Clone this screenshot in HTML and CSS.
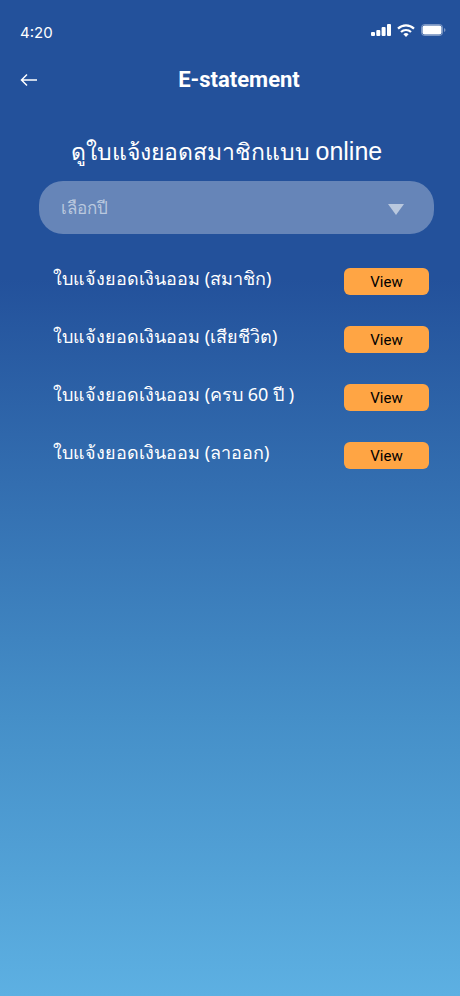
FILE: index.html
```html
<!DOCTYPE html>
<html lang="th">
<head>
<meta charset="utf-8">
<meta name="viewport" content="width=device-width, initial-scale=1">
<title>E-statement</title>
<link rel="stylesheet" href="styles.css">
</head>
<body>
<div class="status">
  <span class="time">4:20</span>
  <div class="indicators">
    <svg width="20" height="12" viewBox="0 0 20 12" fill="#fff" aria-hidden="true"><rect y="8" width="4" height="4" rx="1"/><rect x="5.300" y="6" width="4" height="6" rx="1"/><rect x="10.600" y="3" width="4" height="9" rx="1"/><rect x="16" width="4" height="12" rx="1"/></svg>
    <svg width="18" height="13" viewBox="0 0 18 13" fill="none" stroke="#fff" stroke-width="2.2" aria-hidden="true"><path d="M1 4.6a11.500 11.500 0 0 1 16 0M4 8a7.200 7.200 0 0 1 10 0"/><path d="M6.400 10.200a4 4 0 0 1 5.200 0L9 13z" fill="#fff" stroke="none"/></svg>
    <svg width="25" height="12" viewBox="0 0 25 12" aria-hidden="true"><rect x=".5" y=".5" width="21" height="11" rx="3" fill="none" stroke="#fff" stroke-opacity=".4"/><rect x="1.500" y="1.500" width="19" height="9" rx="2" fill="#fff"/><path d="M23 4v4q1.500-.6 1.500-2T23 4" fill="#fff" fill-opacity=".4"/></svg>
  </div>
</div>
<header class="bar">
  <button class="back" type="button" aria-label="Back"><svg width="18" height="14" viewBox="0 0 18 14" fill="none" stroke="#fff" stroke-width="1.5" aria-hidden="true"><path d="M17 7H1.500M7 1.500 1.500 7 7 12.500"/></svg></button>
  <h1>E-statement</h1>
</header>
<main>
  <h2><label for="year">ดูใบแจ้งยอดสมาชิกแบบ <span class="latin">online</span></label></h2>
  <div class="picker">
    <select id="year"><option>เลือกปี</option></select>
    <svg class="arrow" width="18" height="12" viewBox="0 0 18 12" aria-hidden="true"><path d="M1 0h16L9 11z" fill="#b9c8de"/></svg>
  </div>
  <ul class="list">
    <li><span class="name">ใบแจ้งยอดเงินออม (สมาชิก)</span><button type="button">View</button></li>
    <li><span class="name">ใบแจ้งยอดเงินออม (เสียชีวิต)</span><button type="button">View</button></li>
    <li><span class="name">ใบแจ้งยอดเงินออม (ครบ 60 ปี )</span><button type="button">View</button></li>
    <li><span class="name">ใบแจ้งยอดเงินออม (ลาออก)</span><button type="button">View</button></li>
  </ul>
</main>
</body>
</html>
```
FILE: styles.css
```css
* { box-sizing: border-box; }
body {
  margin: 0;
  min-height: 100vh;
  color: #fff;
  font-family: Roboto, "Noto Sans", sans-serif;
  background: linear-gradient(#23519b 0%, #23519b 28%, #458fc8 72%, #5db0e2 100%);
}
.status { display: flex; justify-content: space-between; align-items: center; height: 60px; padding: 4px 14px 0 20px; }
.time { font-family: Inter, sans-serif; font-size: 15px; }
.indicators { display: flex; align-items: center; gap: 6px; padding-bottom: 4px; }
.bar { display: grid; grid-template-columns: 18px 1fr; align-items: center; height: 39px; padding: 0 20px; }
.back { display: flex; padding: 0; border: 0; background: none; }
h1 { margin: 0; font-size: 22px; font-weight: 700; text-align: center; }
main { padding: 32px 26px 32px 39px; }
h2 { margin: 0; padding-right: 20px; font-size: 23px; line-height: 40px; font-weight: 400; text-align: center; white-space: nowrap; }
.latin { font-family: "Liberation Sans", sans-serif; font-size: 25px; }
.picker { position: relative; margin-top: 8px; }
select { display: block; width: 100%; height: 53px; padding: 0 22px; border: 0; border-radius: 24px; appearance: none; background: #6685b8; color: #b9c8de; font: 17px Roboto, "Noto Sans", sans-serif; }
.arrow { position: absolute; right: 29px; top: 23px; pointer-events: none; }
.list { display: grid; gap: 31px; margin: 34px 0 0; padding: 0 5px 0 14px; list-style: none; }
li { display: flex; justify-content: space-between; align-items: center; height: 27px; }
.name { padding-bottom: 6px; font-family: "Noto Sans", sans-serif; font-size: 18px; }
li button { width: 85px; height: 27px; padding: 0; border: 0; border-radius: 6px; background: #ffa544; color: #000; font: 15px Roboto, sans-serif; }
```
